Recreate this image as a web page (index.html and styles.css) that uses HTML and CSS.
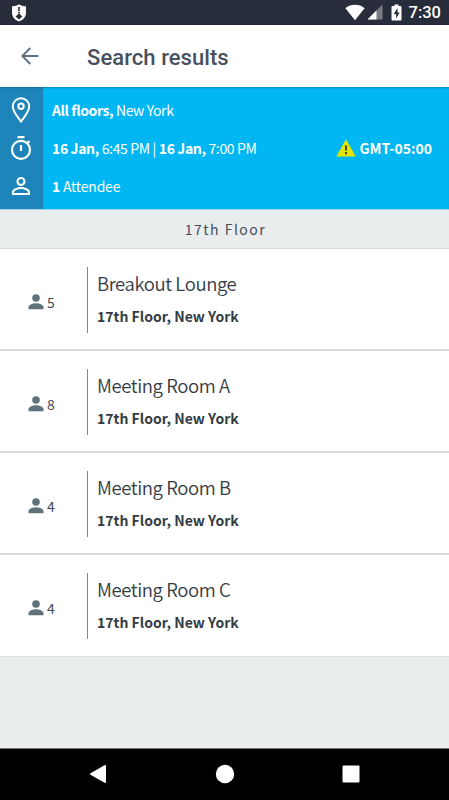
FILE: index.html
```html
<!DOCTYPE html>
<html lang="en">
<head>
<meta charset="utf-8">
<title>Search results</title>
<link rel="stylesheet" href="styles.css">
</head>
<body>
<svg width="0" height="0" class="defs">
  <symbol id="person" viewBox="0 0 16 16"><circle cx="8" cy="4" r="3.8"/><path d="M.5 15.200v-2C.5 10.700 5 9.200 8 9.200s7.500 1.500 7.500 4v2z"/></symbol>
</svg>
<div class="screen">
  <div class="status">
    <svg class="shield" width="16" height="18" viewBox="0 0 16 18"><path fill="#fff" d="M8 .3C10 1.800 12.500 2.300 15 2.300v6.500c0 4-2.800 7.300-7 8.700-4.200-1.400-7-4.700-7-8.700V2.300C3.500 2.300 6 1.800 8 .3z"/><path fill="#272d3a" d="M7.200 3h1.600v4.200H7.200zM7.200 8h1.600v1.600H7.200zM8 9.600l3.400 3-3.400 3-3.400-3z"/></svg>
    <div class="indicators">
      <svg width="20" height="17" viewBox="0 0 20 17"><path fill="#fff" d="M10 16.200.4 4.200C5-.4 15-.4 19.600 4.200z"/></svg>
      <svg class="signal" width="16" height="16" viewBox="0 0 16 16"><path fill="#777b84" d="M15.500.5v15H.5z"/><path fill="#fff" d="M9.500 6.500v9h-9z"/></svg>
      <svg class="battery" width="11" height="17" viewBox="0 0 11 17"><path fill="#fff" d="M3.500.5h4v1.500H9.500q1 0 1 1v12.500q0 1-1 1h-8q-1 0-1-1V3q0-1 1-1h2z"/><path fill="#272d3a" d="M6.500 4 2.700 10h2.400v4.500l3.600-6H6.500z"/></svg>
      <span class="clock">7:30</span>
    </div>
  </div>
  <header class="bar">
    <svg width="18" height="18" viewBox="0 0 18 18" fill="none" stroke="#5f7380" stroke-width="1.900"><path d="M17.500 9H1.500M9.300 1 1.300 9l8 8"/></svg>
    <h1>Search results</h1>
  </header>
  <section class="criteria">
    <div class="line">
      <div class="icon"><svg width="20" height="26" viewBox="0 0 20 26" fill="none" stroke="#fff" stroke-width="2"><path d="M10 24.500C7 20.500 1.800 14.500 1.800 9.400a8.200 8.200 0 0 1 16.400 0c0 5.100-5.200 11.100-8.200 15.100z"/><circle cx="10" cy="9.300" r="2.700"/></svg></div>
      <p><b>All floors,</b> New York</p>
    </div>
    <div class="line">
      <div class="icon"><svg width="22" height="26" viewBox="0 0 22 26" fill="none" stroke="#fff" stroke-width="2.200"><circle cx="11" cy="14.800" r="9"/><path d="M7.500 2.200h7M11 10v6M17.200 8.300l2.300-2.300"/></svg></div>
      <p class="dates"><b>16 Jan,</b> 6:45 PM | <b>16 Jan,</b> 7:00 PM</p>
      <div class="zone"><svg width="20" height="18" viewBox="0 0 20 18"><path fill="#e2e600" d="m10 .3 9.700 17.200H.3z"/><path fill="#454c20" d="M9 6.500h2v5H9zM9 13h2v2.200H9z"/></svg><b>GMT-05:00</b></div>
    </div>
    <div class="line">
      <div class="icon"><svg width="20" height="20" viewBox="0 0 20 20" fill="none" stroke="#fff" stroke-width="2.100"><circle cx="10" cy="5.500" r="3.500"/><path d="M2 18v-1.800c0-2.600 5-4.200 8-4.200s8 1.600 8 4.200V18z"/></svg></div>
      <p class="attendees"><b>1</b> Attendee</p>
    </div>
  </section>
  <h2 class="group">17th Floor</h2>
  <ul class="rooms">
    <li><div class="capacity"><svg width="16" height="16"><use href="#person"/></svg><span>5</span></div><div class="room"><h3>Breakout Lounge</h3><p>17th Floor, New York</p></div></li>
    <li><div class="capacity"><svg width="16" height="16"><use href="#person"/></svg><span>8</span></div><div class="room"><h3>Meeting Room A</h3><p>17th Floor, New York</p></div></li>
    <li><div class="capacity"><svg width="16" height="16"><use href="#person"/></svg><span>4</span></div><div class="room"><h3>Meeting Room B</h3><p>17th Floor, New York</p></div></li>
    <li><div class="capacity"><svg width="16" height="16"><use href="#person"/></svg><span>4</span></div><div class="room"><h3>Meeting Room C</h3><p>17th Floor, New York</p></div></li>
  </ul>
  <nav class="navigation">
    <svg width="18" height="20" viewBox="0 0 18 20"><path fill="#fff" stroke="#fff" stroke-linejoin="round" stroke-width="2" d="M16 2v16L2 10z"/></svg>
    <svg width="20" height="20" viewBox="0 0 20 20"><circle cx="10" cy="10" r="9.200" fill="#fff"/></svg>
    <svg width="18" height="18" viewBox="0 0 18 18"><rect x=".5" y=".5" width="17" height="17" rx="1" fill="#fff"/></svg>
  </nav>
</div>
</body>
</html>
```
FILE: styles.css
```css
* { box-sizing: border-box; margin: 0; padding: 0; }
body { font-family: "Noto Sans CJK SC", sans-serif; color: #343b43; }
svg { display: block; flex: none; }
.defs { position: absolute; }
.screen { width: 449px; height: 800px; display: flex; flex-direction: column; background: #e9edee; overflow: hidden; }

.status { height: 25px; background: #272d3a; border-bottom: 1px solid #1c2940; display: flex; justify-content: space-between; padding: 4px 8px 0 11px; }
.indicators { display: flex; align-items: flex-start; }
.signal { margin: 0 0 0 2px; }
.battery { margin: 0 0 0 8px; }
.indicators .clock { font: 500 16.500px/18px Roboto, sans-serif; color: #fff; margin-left: 7px; }

.indicators { margin-top: -1px; }
.indicators svg, .indicators .clock { position: relative; top: 1px; }

.bar { height: 62px; background: #fff; display: flex; align-items: center; padding-left: 21px; }
.bar h1 { font: 500 22px/28px Roboto, sans-serif; letter-spacing: .06px; color: #48515f; margin: 3px 0 0 48px; }

.criteria { height: 123px; padding: 4px 0; background: linear-gradient(90deg, #1d85b9 43px, #00b7f3 43px); box-shadow: inset 0 2px 2px -1px #00507066, inset 0 -1px 0 #9ed6e6; color: #fff; font-size: 14px; letter-spacing: -.4px; }
.line { height: 38px; display: flex; align-items: center; }
.icon { width: 43px; display: flex; justify-content: center; padding-right: 1px; }
.line p { padding-left: 9px; line-height: 20px; white-space: nowrap; }
.line .dates { letter-spacing: -.36px; }
.line .attendees { letter-spacing: -.2px; }
.zone { margin-left: auto; margin-right: 17px; display: flex; align-items: center; gap: 4px; letter-spacing: 0; line-height: 20px; }

.group { height: 39px; border-bottom: 1px solid #d9dcdd; text-align: center; font-size: 14px; font-weight: 400; line-height: 39px; letter-spacing: 1.500px; padding-left: 2px; color: #454c5b; }
.rooms { list-style: none; }
.rooms li { height: 102px; display: flex; align-items: center; padding-top: 2px; background: #fff; border-bottom: 2px solid #dadcde; }
.rooms li:last-child { border-bottom-width: 1px; height: 102px; padding-top: 1px; }
.capacity { width: 87px; display: flex; align-items: center; padding: 4px 0 0 28px; gap: 3px; font-size: 14px; line-height: 20px; color: #45494e; }
.capacity svg { fill: #5f727c; }
.room { height: 66px; border-left: 1px solid #00b3ee; padding: 2px 0 0 9px; white-space: nowrap; }
.room h3 { font-size: 18.500px; font-weight: 350; line-height: 28px; letter-spacing: -.4px; }
.room p { font-size: 14px; font-weight: 700; line-height: 20px; margin-top: 9px; }

.navigation { height: 52px; margin-top: auto; background: #000; border-top: 1px solid #777; display: flex; align-items: center; justify-content: space-between; padding: 0 89px 1px; }
```
